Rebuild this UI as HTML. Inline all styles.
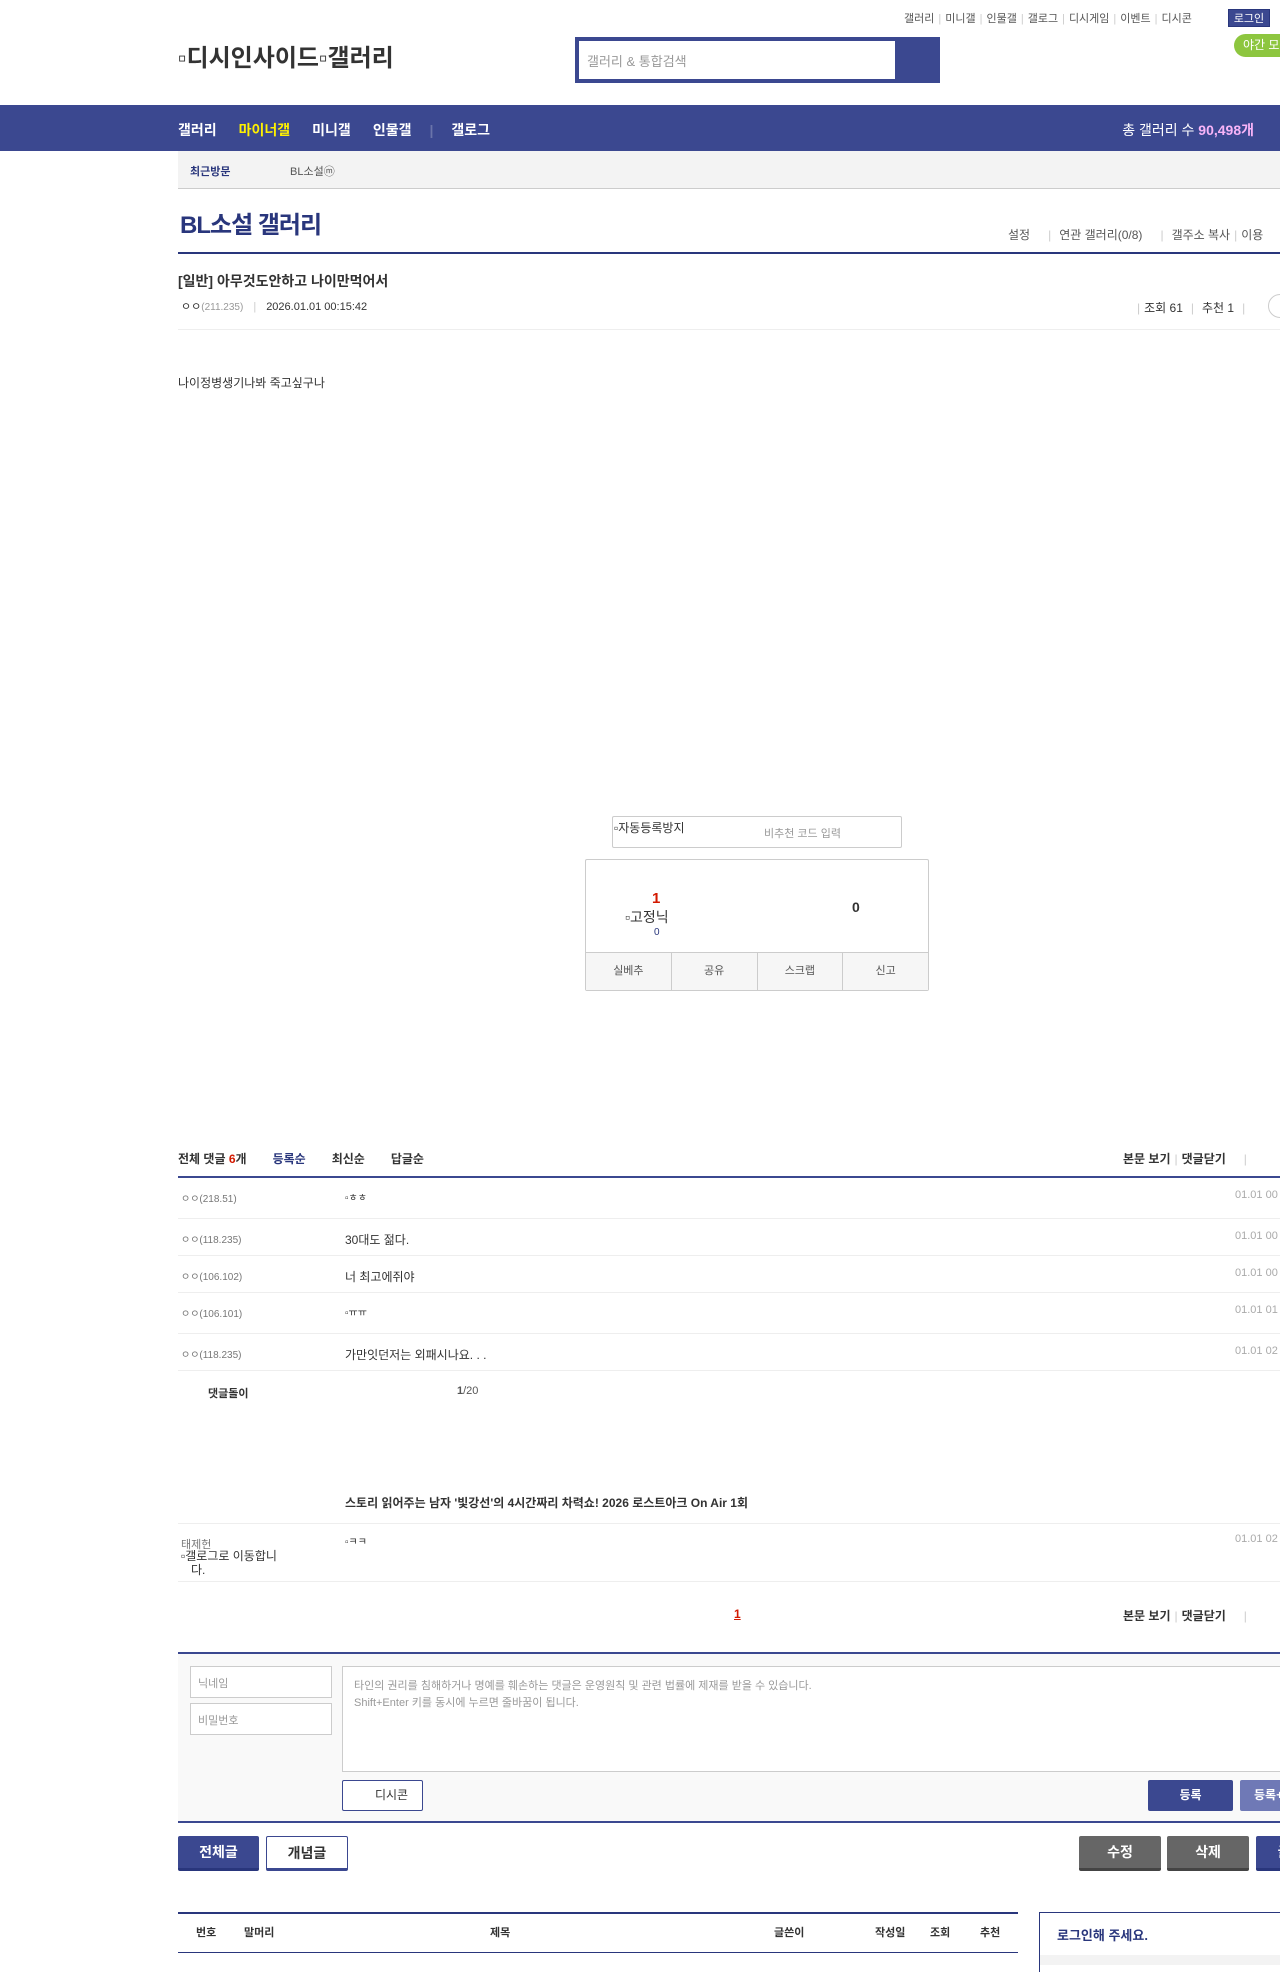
<!DOCTYPE html>
<html><head><meta charset="utf-8"><style>
*{margin:0;padding:0;box-sizing:border-box}
body{width:1280px;height:1960px;overflow:hidden;background:#fff;font-family:"Liberation Sans","Noto Sans CJK KR",sans-serif;color:#333;position:relative;font-size:12px}
.a{position:absolute;white-space:nowrap}
.sep{color:#ccc;margin:0 4px}
.hl{position:absolute;left:178px;right:0;height:1px;background:#eee}
.btn{position:absolute;text-align:center;font-size:14px;font-weight:bold;color:#fff;line-height:32px;border-radius:2px}
</style></head><body>
<div class="a" style="top:10px;left:904px;font-size:11px;color:#555">갤러리<span class="sep">|</span>미니갤<span class="sep">|</span>인물갤<span class="sep">|</span>갤로그<span class="sep">|</span>디시게임<span class="sep">|</span>이벤트<span class="sep">|</span>디시콘</div>
<div class="a" style="top:9px;left:1228px;width:42px;height:18px;background:#3b4890;color:#fff;font-size:11px;text-align:center;line-height:18px;border:1px solid #29367c">로그인</div>
<div class="a" style="top:34px;left:1234px;width:60px;height:23px;background:#8dc63f;border-radius:12px;color:#fff;font-size:12px;line-height:23px;padding-left:9px">야간 모드</div>
<div class="a" style="top:38px;left:178px;font-size:24px;color:#333;font-weight:bold">▫디시인사이드▫갤러리</div>
<div class="a" style="top:37px;left:575px;width:365px;height:46px;background:#3b4890"></div>
<div class="a" style="top:41px;left:579px;width:316px;height:38px;background:#fff;padding:10px 8px;font-size:13px;color:#999">갤러리 &amp; 통합검색</div>
<div class="a" style="top:105px;left:0;width:1280px;height:46px;background:#3b4890"></div>
<div class="a" style="top:120px;left:178px;font-size:14px;font-weight:bold;color:#fff">갤러리<span style="color:#fff100;margin-left:22px">마이너갤</span><span style="margin-left:22px">미니갤</span><span style="margin-left:22px">인물갤</span><span style="color:#6a74aa;margin:0 18px">|</span>갤로그</div>
<div class="a" style="top:120px;right:26px;font-size:14px;color:#fff">총 갤러리 수 <b style="color:#f8b4f8">90,498개</b></div>
<div class="a" style="top:151px;left:178px;right:0;height:38px;background:#f3f3f3;border-bottom:1px solid #ccc"></div>
<div class="a" style="top:163px;left:190px;font-size:11px;font-weight:bold;color:#29367c">최근방문</div>
<div class="a" style="top:163px;left:290px;font-size:11px;color:#555">BL소설ⓜ</div>
<div class="a" style="top:205px;left:180px;font-size:24px;font-weight:bold;color:#29367c;letter-spacing:-1px">BL소설 갤러리</div>
<div class="a" style="top:226px;left:1008px;font-size:12px;color:#555">설정<span class="sep" style="margin:0 8px 0 18px">|</span>연관 갤러리(0/8)<span class="sep" style="margin:0 8px 0 18px">|</span>갤주소 복사<span class="sep">|</span>이용</div>
<div class="a" style="top:252px;left:178px;right:0;height:2px;background:#29367c"></div>
<div class="a" style="top:271px;left:178px;font-size:14px;font-weight:bold;color:#333">[일반] 아무것도안하고 나이만먹어서</div>
<div class="a" style="top:298px;left:181px;font-size:11px;color:#333">ㅇㅇ<span style="color:#999;font-size:10px">(211.235)</span><span class="sep" style="margin:0 10px">|</span>2026.01.01 00:15:42</div>
<div class="a" style="top:299px;left:1133px;font-size:12px;color:#333"><span class="sep">|</span>조회 61<span class="sep" style="margin:0 8px">|</span>추천 1<span class="sep" style="margin:0 8px">|</span></div>
<div class="a" style="top:294px;left:1268px;width:24px;height:24px;border:1px solid #ccc;border-radius:12px"></div>
<div class="hl" style="top:329px"></div>
<div class="a" style="top:374px;left:178px;font-size:12px;color:#333">나이정병생기나봐 죽고싶구나</div>
<div class="a" style="top:816px;left:612px;width:290px;height:32px;border:1px solid #ccc;border-radius:2px"></div>
<div class="a" style="top:819px;left:614px;font-size:12px">▫자동등록방지</div>
<div class="a" style="top:825px;left:764px;font-size:11px;color:#999">비추천 코드 입력</div>
<div class="a" style="top:859px;left:585px;width:344px;height:132px;border:1px solid #ccc;border-radius:2px"></div>
<div class="a" style="top:952px;left:586px;width:342px;height:38px;background:#f6f6f6;border-top:1px solid #ccc;display:flex;font-size:11px;color:#555">
<div style="flex:1;border-right:1px solid #ccc;text-align:center;line-height:36px">실베추</div><div style="flex:1;border-right:1px solid #ccc;text-align:center;line-height:36px">공유</div><div style="flex:1;border-right:1px solid #ccc;text-align:center;line-height:36px">스크랩</div><div style="flex:1;text-align:center;line-height:36px">신고</div></div>
<div class="a" style="top:890px;left:652px;font-size:15px;font-weight:bold;color:#d31900">1</div>
<div class="a" style="top:907px;left:625px;font-size:14px;color:#333">▫고정닉</div>
<div class="a" style="top:927px;left:654px;font-size:10px;color:#29367c">0</div>
<div class="a" style="top:899px;left:852px;font-size:14px;font-weight:bold;color:#333">0</div>
<div class="a" style="top:1150px;left:178px;font-size:12px;font-weight:bold;color:#333">전체 댓글 <span style="color:#d31900">6</span>개<span style="color:#29367c;margin-left:26px">등록순</span><span style="margin-left:26px">최신순</span><span style="margin-left:26px">답글순</span></div>
<div class="a" style="top:1150px;left:1123px;font-size:12px;font-weight:bold;color:#333">본문 보기<span class="sep" style="font-weight:normal">|</span>댓글닫기<span class="sep" style="font-weight:normal;margin-left:18px">|</span></div>
<div class="a" style="top:1176px;left:178px;right:0;height:2px;background:#3b4890"></div>
<div class="a" style="top:1190px;left:181px;font-size:10px;color:#777">ㅇㅇ(218.51)</div><div class="a" style="top:1189px;left:345px;font-size:10px">▫ㅎㅎ</div><div class="a" style="top:1189px;left:1235px;font-size:11px;color:#aaa">01.01 00</div>
<div class="hl" style="top:1218px"></div>
<div class="a" style="top:1231px;left:181px;font-size:10px;color:#777">ㅇㅇ(118.235)</div><div class="a" style="top:1231px;left:345px;font-size:12px">30대도 젊다.</div><div class="a" style="top:1230px;left:1235px;font-size:11px;color:#aaa">01.01 00</div>
<div class="hl" style="top:1255px"></div>
<div class="a" style="top:1268px;left:181px;font-size:10px;color:#777">ㅇㅇ(106.102)</div><div class="a" style="top:1268px;left:345px;font-size:12px">너 최고에쥐야</div><div class="a" style="top:1267px;left:1235px;font-size:11px;color:#aaa">01.01 00</div>
<div class="hl" style="top:1292px"></div>
<div class="a" style="top:1305px;left:181px;font-size:10px;color:#777">ㅇㅇ(106.101)</div><div class="a" style="top:1304px;left:345px;font-size:10px">▫ㅠㅠ</div><div class="a" style="top:1304px;left:1235px;font-size:11px;color:#aaa">01.01 01</div>
<div class="hl" style="top:1333px"></div>
<div class="a" style="top:1346px;left:181px;font-size:10px;color:#777">ㅇㅇ(118.235)</div><div class="a" style="top:1346px;left:345px;font-size:12px">가만잇던저는 외패시나요. . .</div><div class="a" style="top:1345px;left:1235px;font-size:11px;color:#aaa">01.01 02</div>
<div class="hl" style="top:1370px"></div>
<div class="a" style="top:1385px;left:208px;font-size:11px;font-weight:bold">댓글돌이</div><div class="a" style="top:1385px;left:457px;font-size:11px;color:#555"><b>1</b>/20</div>
<div class="a" style="top:1494px;left:345px;font-size:12px;font-weight:bold">스토리 읽어주는 남자 '빛강선'의 4시간짜리 차력쇼! 2026 로스트아크 On Air 1회</div>
<div class="hl" style="top:1523px"></div>
<div class="a" style="top:1536px;left:181px;font-size:11px;color:#777">태제헌</div>
<div class="a" style="top:1549px;left:181px;font-size:12px;line-height:14px;color:#333">▫갤로그로 이동합니<br>&nbsp;&nbsp;&nbsp;다.</div>
<div class="a" style="top:1533px;left:345px;font-size:10px">▫ㅋㅋ</div><div class="a" style="top:1533px;left:1235px;font-size:11px;color:#aaa">01.01 02</div>
<div class="hl" style="top:1581px"></div>
<div class="a" style="top:1607px;left:734px;font-size:12px;font-weight:bold;color:#d31900;text-decoration:underline">1</div>
<div class="a" style="top:1607px;left:1123px;font-size:12px;font-weight:bold;color:#333">본문 보기<span class="sep" style="font-weight:normal">|</span>댓글닫기<span class="sep" style="font-weight:normal;margin-left:18px">|</span></div>
<div class="a" style="top:1652px;left:178px;right:0;height:171px;background:#f9f9f9;border-top:2px solid #3b4890;border-bottom:2px solid #3b4890"></div>
<div class="a" style="top:1666px;left:190px;width:142px;height:32px;background:#fff;border:1px solid #ccc;font-size:11px;color:#999;padding:8px 7px">닉네임</div>
<div class="a" style="top:1703px;left:190px;width:142px;height:32px;background:#fff;border:1px solid #ccc;font-size:11px;color:#999;padding:8px 7px">비밀번호</div>
<div class="a" style="top:1666px;left:342px;width:960px;height:106px;background:#fff;border:1px solid #ccc;font-size:11px;color:#999;padding:11px 11px;line-height:17px">타인의 권리를 침해하거나 명예를 훼손하는 댓글은 운영원칙 및 관련 법률에 제재를 받을 수 있습니다.<br>Shift+Enter 키를 동시에 누르면 줄바꿈이 됩니다.</div>
<div class="a" style="top:1780px;left:342px;width:81px;height:31px;background:#fff;border:1px solid #3b4890;border-radius:2px;font-size:12px;color:#333;text-align:center;line-height:29px;padding-left:18px">디시콘</div>
<div class="btn" style="top:1780px;left:1148px;width:85px;height:31px;background:#3b4890;font-size:12px;line-height:31px">등록</div>
<div class="btn" style="top:1780px;left:1240px;width:85px;height:31px;background:#6f79b6;font-size:12px;line-height:31px;text-align:left;padding-left:14px">등록+추천</div>
<div class="btn" style="top:1836px;left:178px;width:81px;height:35px;background:#3b4890;border-bottom:3px solid #29367c">전체글</div>
<div class="btn" style="top:1836px;left:266px;width:82px;height:35px;background:#fff;color:#333;border:1px solid #3b4890;border-bottom:3px solid #3b4890">개념글</div>
<div class="btn" style="top:1836px;left:1079px;width:82px;height:35px;background:#666;border-bottom:3px solid #444">수정</div>
<div class="btn" style="top:1836px;left:1167px;width:82px;height:35px;background:#666;border-bottom:3px solid #444">삭제</div>
<div class="btn" style="top:1836px;left:1256px;width:82px;height:35px;background:#3b4890;border-bottom:3px solid #29367c">글쓰기</div>
<div class="a" style="top:1912px;left:178px;width:840px;height:41px;border-top:2px solid #29367c;border-bottom:1px solid #29367c"></div>
<div class="a" style="top:1924px;left:196px;font-size:11px;font-weight:bold;color:#333">번호</div>
<div class="a" style="top:1924px;left:244px;font-size:11px;font-weight:bold;color:#333">말머리</div>
<div class="a" style="top:1924px;left:490px;font-size:11px;font-weight:bold;color:#333">제목</div>
<div class="a" style="top:1924px;left:774px;font-size:11px;font-weight:bold;color:#333">글쓴이</div>
<div class="a" style="top:1924px;left:875px;font-size:11px;font-weight:bold;color:#333">작성일</div>
<div class="a" style="top:1924px;left:930px;font-size:11px;font-weight:bold;color:#333">조회</div>
<div class="a" style="top:1924px;left:980px;font-size:11px;font-weight:bold;color:#333">추천</div>
<div class="a" style="top:1912px;left:1039px;width:260px;height:60px;border:1px solid #29367c;border-bottom:none"></div>
<div class="a" style="top:1925px;left:1057px;font-size:13px;font-weight:bold;color:#29367c">로그인해 주세요.</div>
<div class="a" style="top:1955px;left:1040px;width:260px;height:10px;background:#f3f3f3"></div>
</body></html>
